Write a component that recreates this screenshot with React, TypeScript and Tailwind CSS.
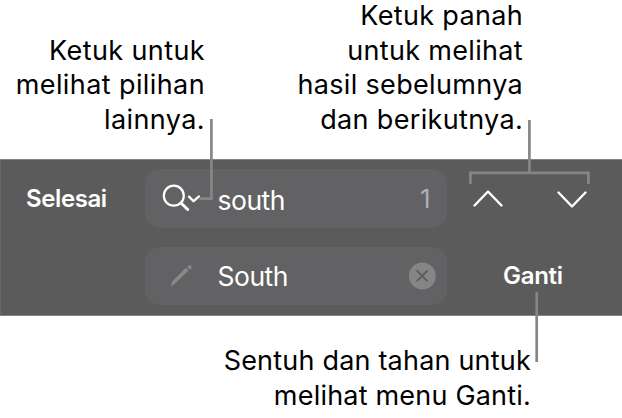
import { clsx } from 'clsx'
import type { ReactNode } from 'react'

type CalloutProps = {
	lines: string[]
	className?: string
}

function Callout({ lines, className }: CalloutProps) {
	return (
		<p
			className={clsx(
				'flex flex-col gap-[6.5px] text-right text-[27px] leading-7 whitespace-nowrap text-black',
				className,
			)}
		>
			{lines.map((line) => (
				<span key={line} className="block">
					{line}
				</span>
			))}
		</p>
	)
}

type FieldProps = {
	icon: ReactNode
	value: string
	trailing: ReactNode
	className?: string
	valueClassName?: string
}

function Field({
	icon,
	value,
	trailing,
	className,
	valueClassName,
}: FieldProps) {
	return (
		<div
			className={clsx(
				'flex w-[302px] shrink-0 items-center rounded-[15px] bg-[#626264] pr-[11px]',
				className,
			)}
		>
			<span className="w-[72.5px] shrink-0">{icon}</span>
			<span
				className={clsx(
					'grow text-[26.5px] leading-8 tracking-[-0.5px] text-white',
					valueClassName,
				)}
			>
				{value}
			</span>
			{trailing}
		</div>
	)
}

function SearchIcon() {
	return (
		<svg
			className="ml-[16px] block"
			width="42"
			height="30"
			viewBox="0 0 42 30"
			fill="none"
			stroke="white"
			strokeLinecap="round"
			strokeLinejoin="round"
			aria-hidden="true"
		>
			<circle cx="12.8" cy="11.7" r="10" strokeWidth="2.2" />
			<path d="M20 19L26.7 25.5" strokeWidth="3" />
			<path d="M28 12.6L32.6 17.2L38 12.4" strokeWidth="2.3" />
		</svg>
	)
}

function PencilIcon() {
	return (
		<svg
			className="ml-[24px] block"
			width="26"
			height="24"
			viewBox="0 0 26 24"
			fill="#8a8a8b"
			aria-hidden="true"
		>
			<path d="M16.8 3.8L19.6 6.5L4.9 20.6L1.8 21.9L2.9 18.1Z" />
			<path d="M18.1 3L19.4 1.7Q20.8 .6 22.1 1.7Q23.3 3 22.2 4.4L20.9 5.7Z" />
		</svg>
	)
}

function ClearIcon() {
	return (
		<svg
			className="shrink-0"
			width="28"
			height="28"
			viewBox="0 0 28 28"
			aria-hidden="true"
		>
			<circle cx="14.3" cy="14" r="13.5" fill="#858586" />
			<path
				d="M9.3 9L18.9 18.6M18.9 9L9.3 18.6"
				stroke="#5d5d5e"
				strokeWidth="2"
				strokeLinecap="round"
			/>
		</svg>
	)
}

function Chevron({ d }: { d: string }) {
	return (
		<svg
			width="32"
			height="20"
			viewBox="0 0 32 20"
			fill="none"
			stroke="white"
			strokeWidth="2.4"
			strokeLinecap="round"
			strokeLinejoin="round"
			aria-hidden="true"
		>
			<path d={d} />
		</svg>
	)
}

function LeaderLines() {
	return (
		<svg
			className="pointer-events-none absolute inset-0"
			width="622"
			height="418"
			viewBox="0 0 622 418"
			fill="none"
			stroke="#868686"
			strokeWidth="2.7"
			aria-hidden="true"
		>
			<path d="M211.4 119V198.6H199.5" />
			<path d="M529.4 120V172.8M470.4 184V172.8H588.4V184" />
			<path d="M536.7 292V362" />
		</svg>
	)
}

function App() {
	return (
		<main className="relative flex h-[418px] w-[622px] flex-col overflow-hidden bg-white font-['Inter','Liberation_Sans',sans-serif]">
			<div className="flex h-[159px] shrink-0 items-end pb-[25.5px]">
				<Callout
					className="w-[205px] tracking-[0.4px]"
					lines={['Ketuk untuk', 'melihat pilihan', 'lainnya.']}
				/>
				<Callout
					className="w-[318px] tracking-[0.33px]"
					lines={[
						'Ketuk panah',
						'untuk melihat',
						'hasil sebelumnya',
						'dan berikutnya.',
					]}
				/>
			</div>
			<div className="flex h-[157px] shrink-0 flex-col gap-[19px] border border-r-0 border-[#848484] border-l-[#6a6a6a] bg-[#5b5b5b] pt-[9px]">
				<div className="flex items-center">
					<button className="w-[144px] pl-[25px] text-left text-[24px] leading-8 font-semibold tracking-[-0.4px] text-white">
						Selesai
					</button>
					<Field
						className="h-[59px]"
						valueClassName="pt-[3px]"
						icon={<SearchIcon />}
						value="south"
						trailing={
							<span className="pr-[5.5px] text-[26px] leading-8 text-[#aeaeb6]">
								1
							</span>
						}
					/>
					<div className="flex gap-[52px] pl-[24.5px]">
						<Chevron d="M2.5 16.5L16 2.5L29.5 16.5" />
						<Chevron d="M2.5 3.5L16 17.5L29.5 3.5" />
					</div>
				</div>
				<div className="flex items-center pl-[144px]">
					<Field
						className="h-[58px]"
						icon={<PencilIcon />}
						value="South"
						trailing={<ClearIcon />}
					/>
					<button className="pl-[56px] text-[24px] leading-8 font-semibold tracking-[-0.3px] text-white">
						Ganti
					</button>
				</div>
			</div>
			<Callout
				className="w-[531px] pt-[31px] tracking-[0.2px]"
				lines={['Sentuh dan tahan untuk', 'melihat menu Ganti.']}
			/>
			<LeaderLines />
		</main>
	)
}

export default App
